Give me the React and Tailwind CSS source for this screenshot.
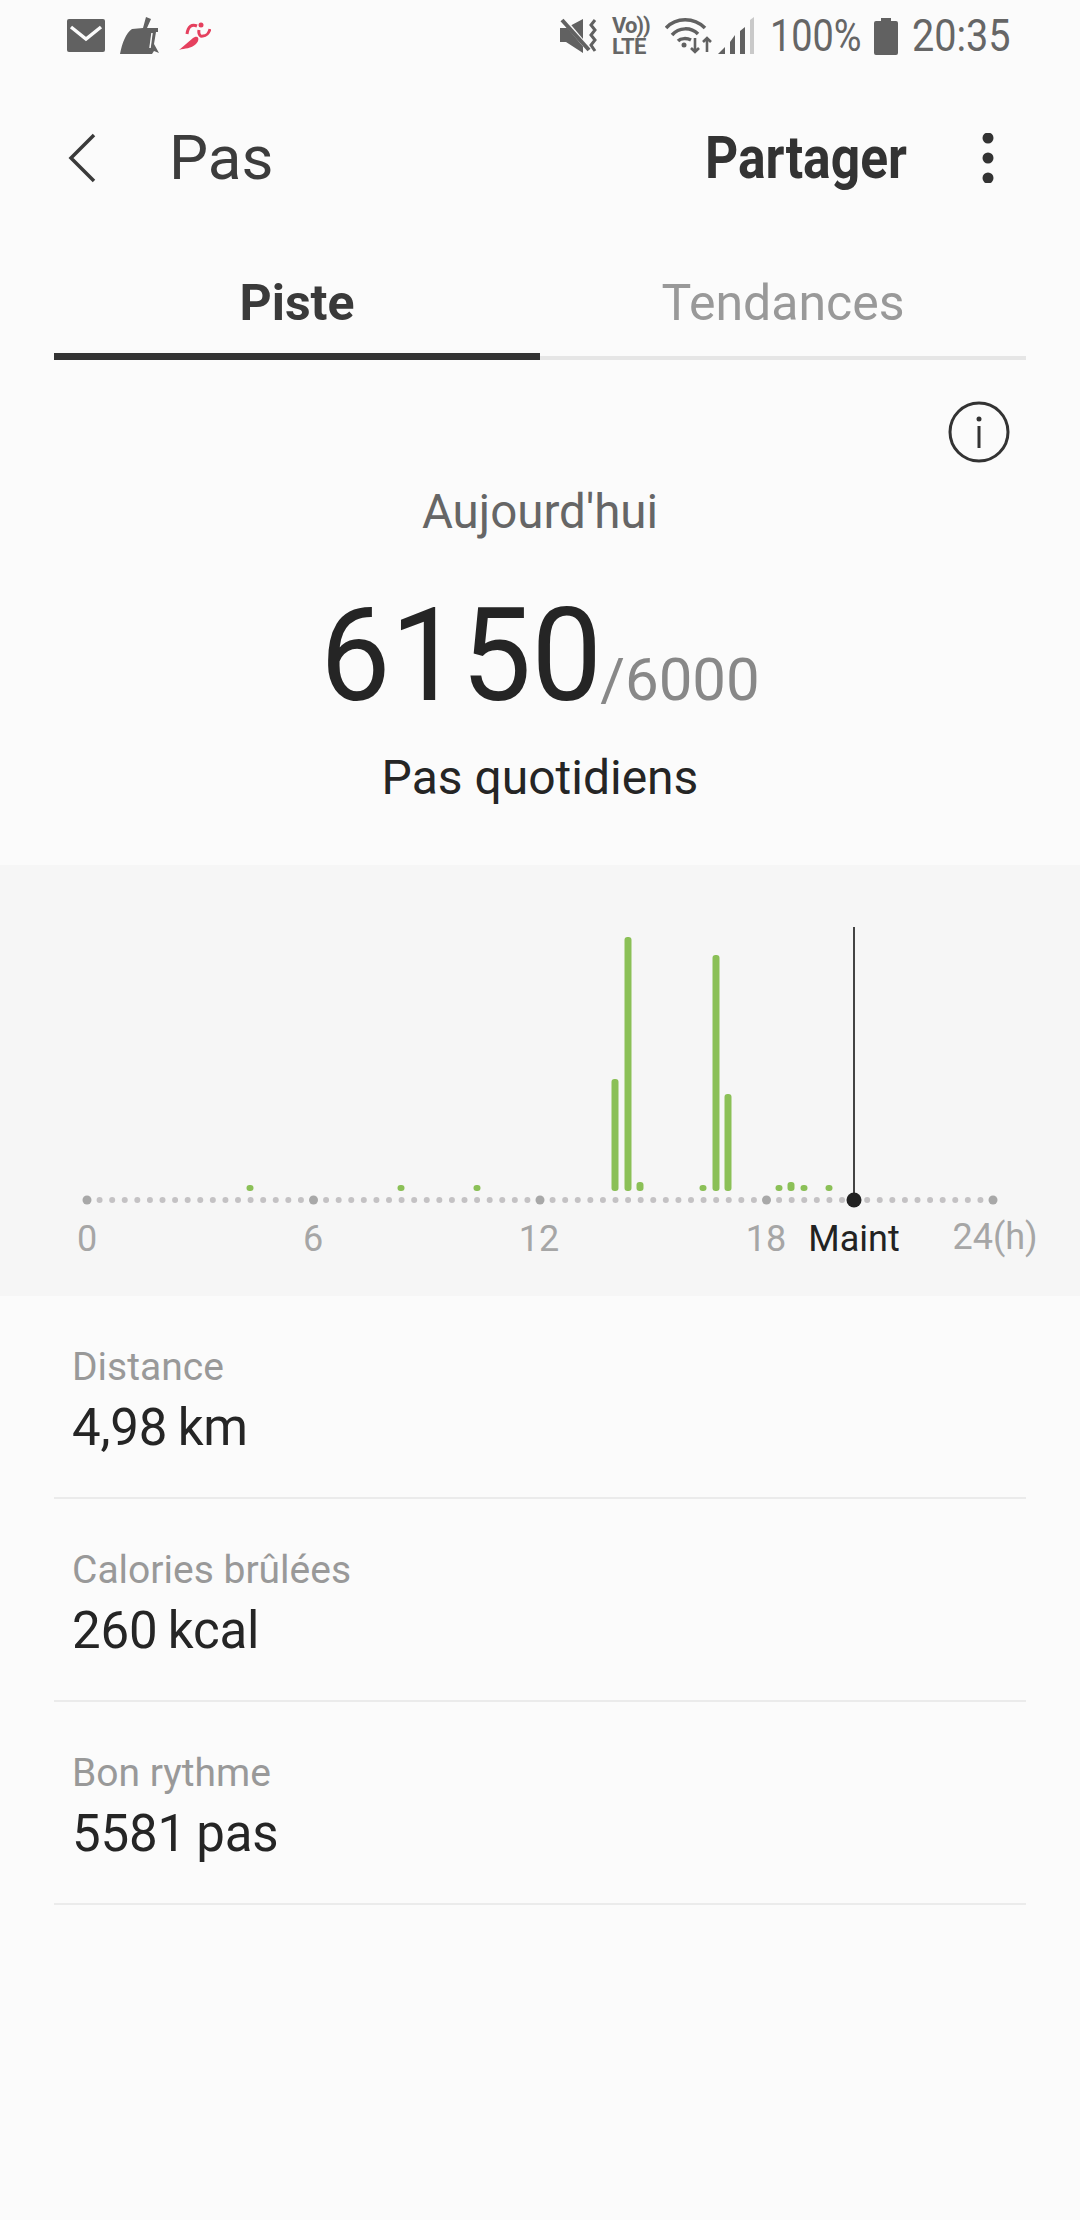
const FONT = { fontFamily: "Roboto, sans-serif" };

// step counts per 20 minute slot, drawn as green bars over the dotted axis
const BARS = [
  { x: 250, top: 1185 },
  { x: 401, top: 1185 },
  { x: 477, top: 1185 },
  { x: 615, top: 1079 },
  { x: 628, top: 937 },
  { x: 640, top: 1182 },
  { x: 703, top: 1185 },
  { x: 716, top: 955 },
  { x: 728, top: 1094 },
  { x: 779, top: 1185 },
  { x: 791, top: 1182 },
  { x: 804, top: 1185 },
  { x: 829, top: 1185 },
];

const AXIS_LEFT = 87;
const AXIS_STEP = 906 / 72;
const CHART_TOP = 865;

const STATS = [
  { label: "Distance", value: "4,98 km" },
  { label: "Calories brûlées", value: "260 kcal" },
  { label: "Bon rythme", value: "5581 pas" },
];

function StatusBar() {
  return (
    <div className="flex h-[72px] items-center pl-[67px] pr-[72px] text-[#666666]">
      <svg width="38" height="34" viewBox="0 0 38 34">
        <rect y="0" width="38" height="33" rx="2" fill="#616161" />
        <path d="M4 8 L19 20 L34 8" fill="none" stroke="#fbfbfb" strokeWidth="3.5" />
      </svg>
      <svg className="ml-[15px]" width="40" height="38" viewBox="0 0 40 38" fill="#616161">
        <path d="M26 0 L31 2 L27 11 L38 11 L38 15 L36 15 L34 27 L39 36 L34 34 L32 37 L3 37 L0 37 C2 26 6 16 12 12 L23 11 Z" />
        <path d="M32 16 L30 31" stroke="#fbfbfb" strokeWidth="1.5" />
      </svg>
      <svg className="ml-[19px]" width="32" height="30" viewBox="0 0 32 30" fill="none">
        <path d="M0 29 L14 17 C20 13 21 19 17 23 C12 28 6 27 0 29 Z" fill="#e5405e" />
        <path d="M8 13 C9 5 13 3 18 5 M20 9 C19 14 22 16 24 15 C27 15 30 12 31 8" stroke="#e5405e" strokeWidth="3" />
        <circle cx="22" cy="4" r="2.5" fill="#e5405e" />
      </svg>

      <svg className="ml-auto" width="38" height="36" viewBox="0 0 38 36" fill="#616161">
        <path d="M0 10 H6 L23 1 V35 L6 24 H0 Z" />
        <path d="M2 0 L30 33" stroke="#fbfbfb" strokeWidth="5" />
        <path d="M2 2 L29 32" stroke="#616161" strokeWidth="4" />
        <path d="M35 2 L31 7 L35 12 L31 17 L35 22 L31 27 L35 33" fill="none" stroke="#616161" strokeWidth="3" />
      </svg>
      <div className="ml-[14px] flex w-[36px] flex-col text-[22px] font-bold leading-[21px] text-[#666666]">
        <span className="tracking-[-1px]">Vo))</span>
        <span className="tracking-[-0.5px]">LTE</span>
      </div>
      <svg className="ml-[17px]" width="47" height="38" viewBox="0 0 47 38" fill="none" stroke="#616161" strokeWidth="3.5">
        <path d="M1 11 C11 0 29 0 40 11" />
        <path d="M7 18 C14 10 26 10 33 17" />
        <path d="M13 24 C16 21 22 21 26 23" />
        <circle cx="19" cy="28" r="2.5" fill="#616161" stroke="none" />
        <path d="M30 21 V35 M26 31 L30 35 L34 31" strokeWidth="2.6" />
        <path d="M42 35 V21 M38 25 L42 21 L46 25" strokeWidth="2.6" />
      </svg>
      <svg className="ml-[6px]" width="38" height="38" viewBox="0 0 38 38" fill="#616161">
        <path d="M0 37 L7 30 V37 Z" />
        <path d="M12 25 L17 18 V37 H12 Z" />
        <path d="M22 14 L27 10 V37 H22 Z" />
        <path d="M32 3 L36 0 V37 H32 Z" fill="#c9c9c9" />
      </svg>
      <span className="ml-[14px] inline-block w-[90px] origin-left scale-x-[0.86] text-[44px] leading-none" style={FONT}>
        100%
      </span>
      <svg className="ml-[14px]" width="24" height="37" viewBox="0 0 24 37" fill="#616161">
        <path d="M7 0 H17 V3 H22 Q24 3 24 5 V35 Q24 37 22 37 H2 Q0 37 0 35 V5 Q0 3 2 3 H7 Z" />
      </svg>
      <span className="ml-[14px] inline-block w-[96px] origin-left scale-x-[0.9] text-[44px] leading-none" style={FONT}>
        20:35
      </span>
    </div>
  );
}

function Header() {
  return (
    <div className="flex h-[172px] items-center pl-[68px] pr-[86px]">
      <svg width="28" height="50" viewBox="0 0 28 50" fill="none" stroke="#3a3a3a" strokeWidth="3.5">
        <path d="M26 2 L3 25 L26 48" />
      </svg>
      <span className="ml-[73px] text-[62px] leading-none text-[#3c3c3c]">Pas</span>
      <span className="ml-auto inline-block origin-right scale-x-[0.86] text-[60px] font-bold leading-none text-[#333333]">
        Partager
      </span>
      <svg className="ml-[75px]" width="12" height="50" viewBox="0 0 12 50" fill="#333333">
        <circle cx="6" cy="5" r="5.5" />
        <circle cx="6" cy="25" r="5.5" />
        <circle cx="6" cy="45" r="5.5" />
      </svg>
    </div>
  );
}

function Tabs() {
  return (
    <div className="mx-[54px] flex h-[116px] items-end">
      <div className="flex w-1/2 flex-col">
        <span className="pb-[25px] text-center text-[50px] font-bold leading-none text-[#3a3a3a]">Piste</span>
        <div className="h-[7px] bg-[#333333]" />
      </div>
      <div className="flex w-1/2 flex-col">
        <span className="pb-[28px] text-center text-[50px] leading-none text-[#999999]">Tendances</span>
        <div className="h-[4px] bg-[#e6e6e6]" />
      </div>
    </div>
  );
}

function Summary() {
  return (
    <div className="relative flex h-[505px] flex-col items-center">
      <svg className="absolute right-[70px] top-[41px]" width="62" height="62" viewBox="0 0 62 62" fill="none">
        <circle cx="31" cy="31" r="29" stroke="#333333" strokeWidth="3" />
        <circle cx="31" cy="18" r="2.5" fill="#333333" />
        <path d="M31 25 V47" stroke="#333333" strokeWidth="3" />
      </svg>
      <span className="mt-[125px] text-[47.5px] leading-[54px] text-[#666666]">Aujourd'hui</span>
      <div className="mt-[52px] flex items-baseline">
        <span className="inline-block w-[280px] origin-left scale-x-[0.965] text-[130px] leading-[130px] text-[#252525]">6150</span>
        <span className="text-[60px] leading-none text-[#888888]">/6000</span>
      </div>
      <span className="mt-[29px] text-[48px] leading-[56px] text-[#252525]">Pas quotidiens</span>
    </div>
  );
}

function Chart() {
  const dots = [];
  for (let i = 0; i <= 72; i++) {
    const big = i % 18 === 0;
    dots.push(
      <circle
        key={i}
        cx={AXIS_LEFT + i * AXIS_STEP}
        cy={1200 - CHART_TOP}
        r={big ? 4.5 : 3}
        fill={big ? "#a8a8a8" : "#c4c2c4"}
      />
    );
  }
  return (
    <div className="h-[431px] bg-[#f6f6f6]">
      <svg width="1080" height="431" viewBox="0 0 1080 431" style={FONT}>
        {dots}
        {BARS.map((bar) => (
          <rect
            key={bar.x}
            x={bar.x - 3.5}
            y={bar.top - CHART_TOP}
            width="7"
            height={1191 - bar.top}
            rx="3"
            fill="#8bc057"
          />
        ))}
        <path d="M854 62 V335" stroke="#444444" strokeWidth="2" />
        <circle cx="854" cy="335" r="7.5" fill="#222222" />
        <g fontSize="36" fill="#a6a6a6" textAnchor="middle">
          <text x="87" y="386">0</text>
          <text x="313" y="386">6</text>
          <text x="539" y="386">12</text>
          <text x="766" y="386">18</text>
          <text x="995" y="384">24(h)</text>
        </g>
        <text x="854" y="386" fontSize="36" fill="#222222" textAnchor="middle">Maint</text>
      </svg>
    </div>
  );
}

function StatRow({ label, value }) {
  return (
    <div className="flex h-[203px] flex-col border-b-2 border-[#ebebeb] pl-[18px] pt-[49px]">
      <span className="text-[39px] leading-[44px] text-[#999999]">{label}</span>
      <span className="mt-[11px] text-[51px] leading-[56px] tracking-[-0.2px] text-[#252525] [word-spacing:-2px]">{value}</span>
    </div>
  );
}

export default function App() {
  return (
    <div className="h-[2220px] w-[1080px] overflow-hidden bg-[#fbfbfb]" style={FONT}>
      <StatusBar />
      <Header />
      <Tabs />
      <Summary />
      <Chart />
      <div className="mx-[54px]">
        {STATS.map((stat) => (
          <StatRow key={stat.label} label={stat.label} value={stat.value} />
        ))}
      </div>
    </div>
  );
}
